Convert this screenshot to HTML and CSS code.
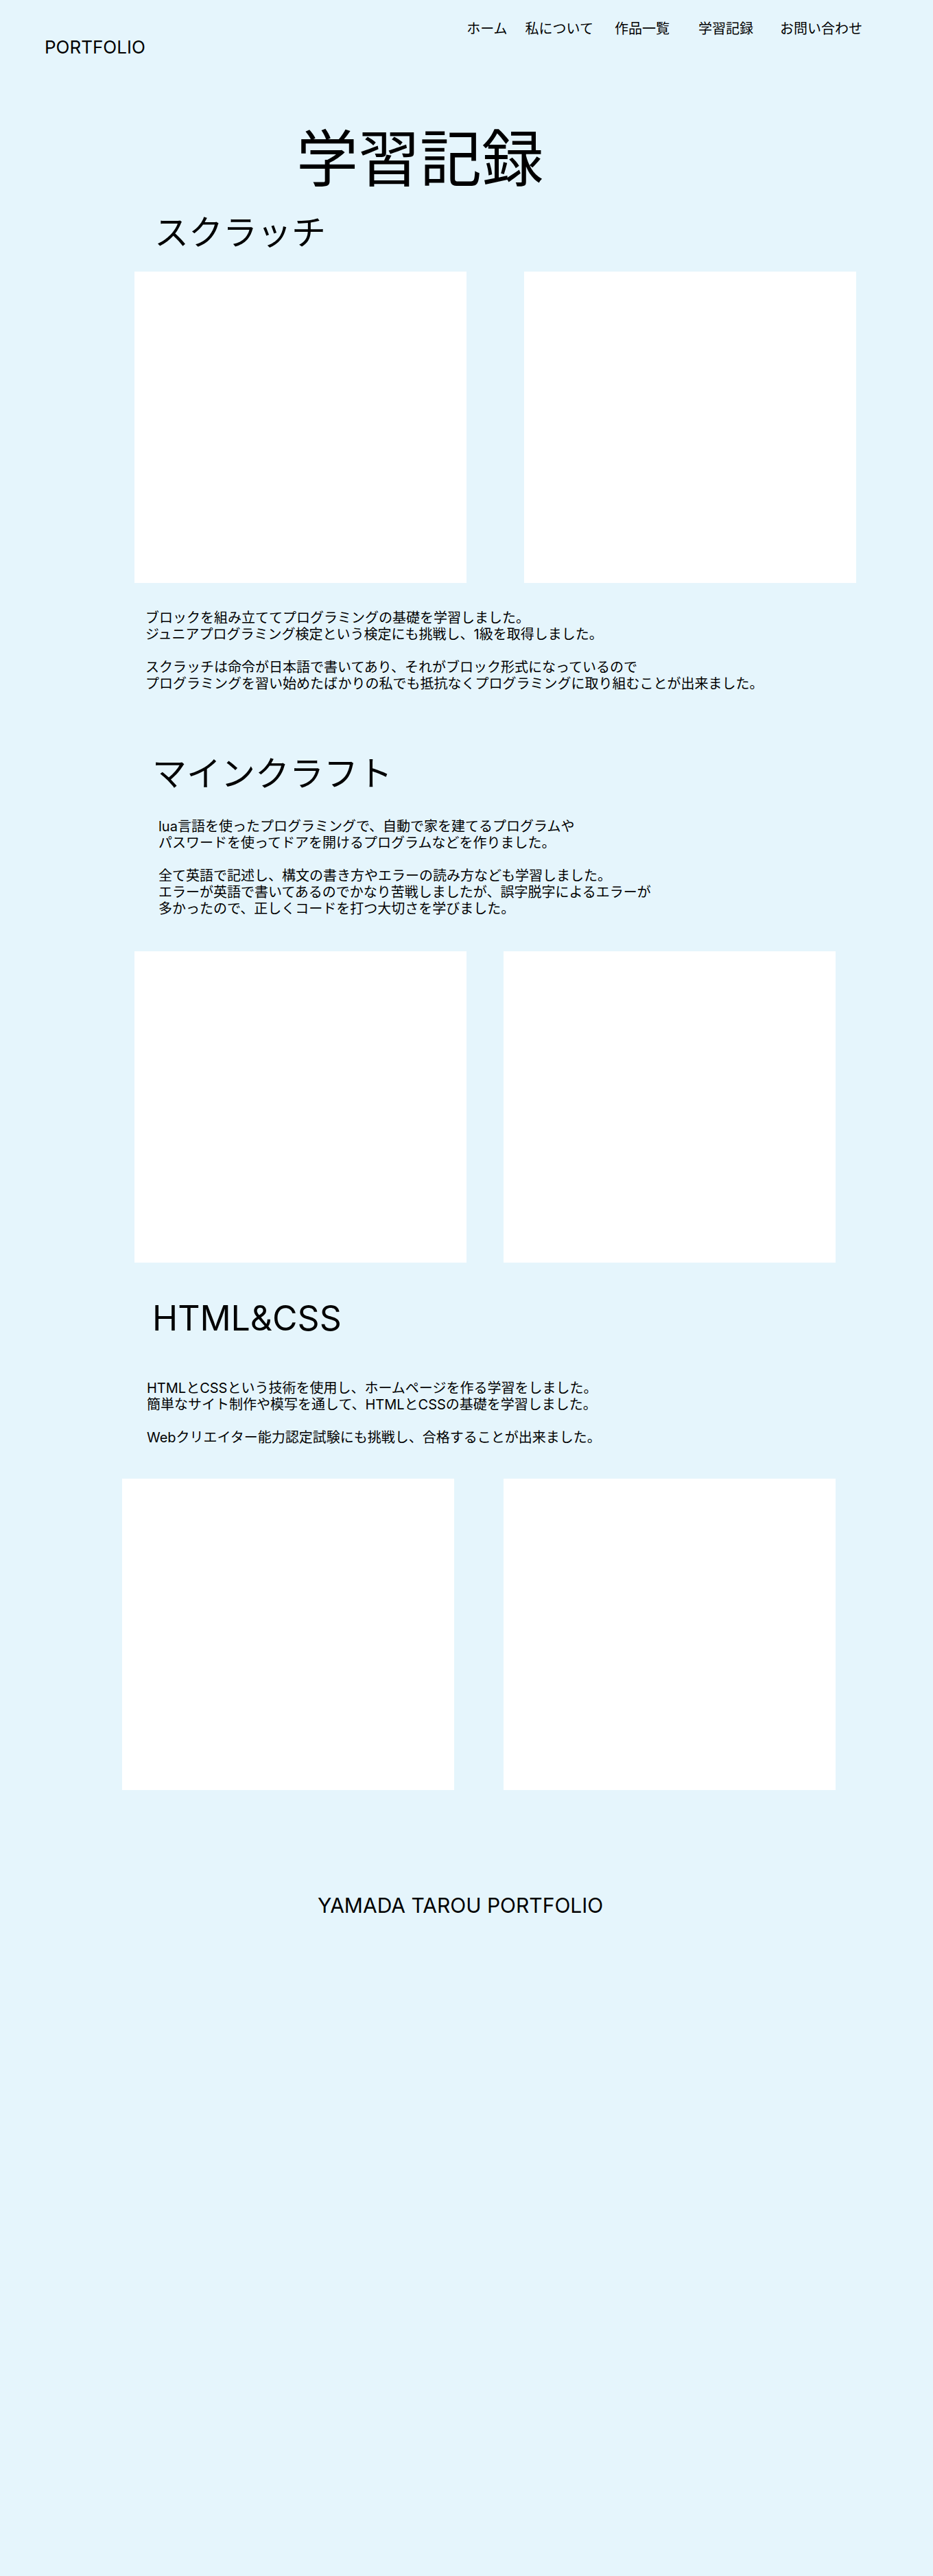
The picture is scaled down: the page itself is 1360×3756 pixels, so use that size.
FILE: index.html
```html
<!DOCTYPE html>
<html lang="ja">
<head>
  <meta charset="utf-8">
  <meta name="viewport" content="width=device-width, initial-scale=1">
  <title>学習記録 | PORTFOLIO</title>
  <link rel="stylesheet" href="styles.css">
</head>
<body>
  <header class="site-header">
    <a class="brand" href="#">PORTFOLIO</a>
    <nav class="site-nav">
      <a class="nav-link" href="#home">ホーム</a>
      <a class="nav-link nav-about" href="#about">私について</a>
      <a class="nav-link nav-works" href="#works">作品一覧</a>
      <a class="nav-link nav-study" href="#study">学習記録</a>
      <a class="nav-link nav-contact" href="#contact">お問い合わせ</a>
    </nav>
  </header>

  <main id="study">
    <h1 class="page-title">学習記録</h1>

    <section class="topic scratch">
      <h2 class="topic-title">スクラッチ</h2>
      <div class="gallery">
        <div class="shot"></div>
        <div class="shot"></div>
      </div>
      <div class="topic-text">
        <p>ブロックを組み立ててプログラミングの基礎を学習しました。<br>ジュニアプログラミング検定という検定にも挑戦し、1級を取得しました。</p>
        <p>スクラッチは命令が日本語で書いてあり、それがブロック形式になっているので<br>プログラミングを習い始めたばかりの私でも抵抗なくプログラミングに取り組むことが出来ました。</p>
      </div>
    </section>

    <section class="topic minecraft">
      <h2 class="topic-title">マインクラフト</h2>
      <div class="topic-text">
        <p>lua言語を使ったプログラミングで、自動で家を建てるプログラムや<br>パスワードを使ってドアを開けるプログラムなどを作りました。</p>
        <p>全て英語で記述し、構文の書き方やエラーの読み方なども学習しました。<br>エラーが英語で書いてあるのでかなり苦戦しましたが、誤字脱字によるエラーが<br>多かったので、正しくコードを打つ大切さを学びました。</p>
      </div>
      <div class="gallery">
        <div class="shot"></div>
        <div class="shot"></div>
      </div>
    </section>

    <section class="topic web">
      <h2 class="topic-title">HTML&amp;CSS</h2>
      <div class="topic-text">
        <p>HTMLとCSSという技術を使用し、ホームページを作る学習をしました。<br>簡単なサイト制作や模写を通して、HTMLとCSSの基礎を学習しました。</p>
        <p>Webクリエイター能力認定試験にも挑戦し、合格することが出来ました。</p>
      </div>
      <div class="gallery">
        <div class="shot"></div>
        <div class="shot"></div>
      </div>
    </section>
  </main>

  <footer class="site-footer">YAMADA TAROU PORTFOLIO</footer>
</body>
</html>
```

FILE: styles.css
```css
* {
  box-sizing: border-box;
}

body {
  margin: 0;
  background: #e5f5fc;
  color: #000;
  font-family: Inter, "Noto Sans CJK JP", sans-serif;
  font-size: 20px;
  line-height: 24px;
}

h1,
h2,
p {
  margin: 0;
  font-weight: 400;
}

.site-header {
  display: flex;
  align-items: flex-start;
  justify-content: space-between;
  padding: 30px 103px 0 65px;
}

.brand {
  margin-top: 23px;
  color: inherit;
  font-size: 26px;
  line-height: 32px;
  text-decoration: none;
}

.site-nav {
  display: flex;
}

.nav-link {
  color: inherit;
  text-decoration: none;
  white-space: nowrap;
}

.nav-about {
  margin-left: 26px;
}

.nav-works {
  margin-left: 31px;
}

.nav-study {
  margin-left: 42px;
}

.nav-contact {
  margin-left: 39px;
}

.page-title {
  padding: 93px 0 0 432px;
  font-size: 90px;
  line-height: 108px;
}

.topic-title {
  font-size: 50px;
  line-height: 60px;
}

.topic-text {
  display: grid;
  gap: 24px;
}

.gallery {
  display: flex;
  gap: 72px;
  padding: 0 16px 0 196px;
}

.shot {
  flex: 0 1 484px;
  aspect-ratio: 484 / 454;
  background: #fff;
}

.scratch {
  padding-top: 23px;
}

.scratch .topic-title {
  padding-left: 225px;
}

.scratch .gallery {
  gap: 84px;
  padding-top: 27px;
}

.scratch .topic-text {
  padding: 39px 0 0 212px;
}

.minecraft {
  padding-top: 89px;
}

.minecraft .topic-title {
  padding-left: 222px;
}

.minecraft .topic-text {
  padding: 35px 0 0 231px;
}

.minecraft .gallery {
  gap: 54px;
  padding-top: 50px;
}

.web {
  padding-top: 51px;
}

.web .topic-title {
  padding-left: 222px;
}

.web .topic-text {
  padding: 60px 0 0 214px;
}

.web .gallery {
  padding-top: 48px;
  padding-left: 178px;
}

.site-footer {
  padding: 150px 0 60px 463px;
  font-size: 30px;
  line-height: 36px;
}
```
